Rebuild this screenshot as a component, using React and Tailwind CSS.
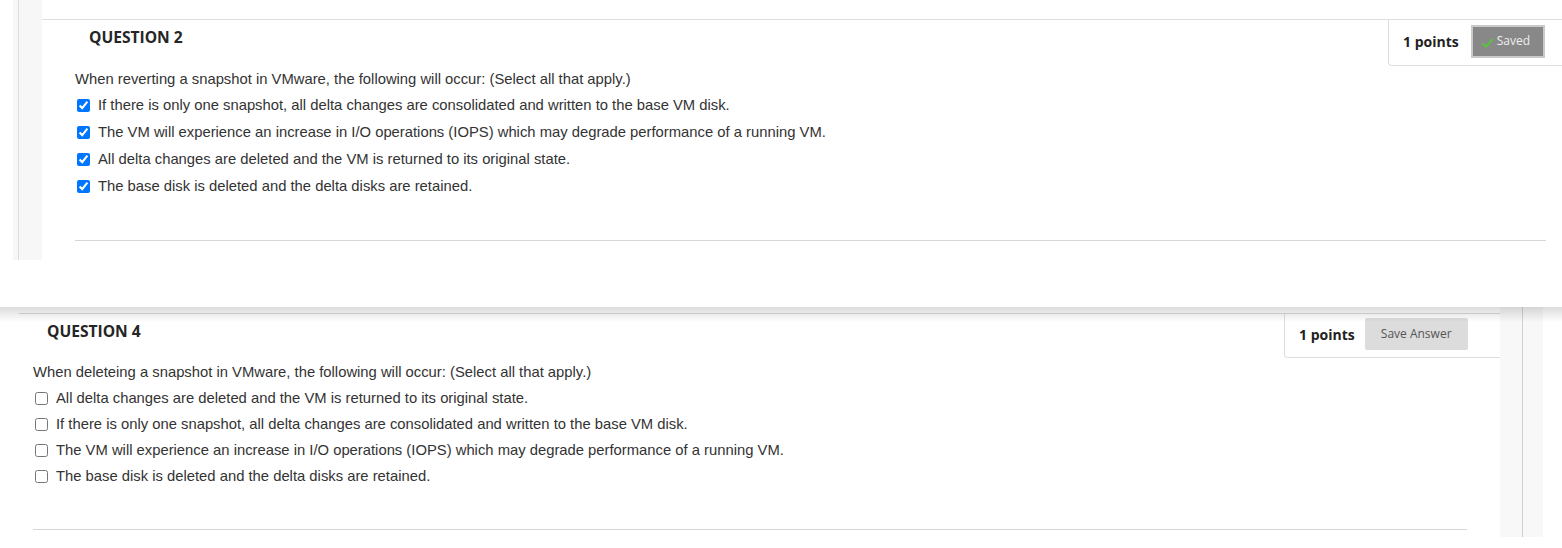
import { useState } from 'react';

const Q2_OPTIONS = [
  'If there is only one snapshot, all delta changes are consolidated and written to the base VM disk.',
  'The VM will experience an increase in I/O operations (IOPS) which may degrade performance of a running VM.',
  'All delta changes are deleted and the VM is returned to its original state.',
  'The base disk is deleted and the delta disks are retained.',
];

const Q4_OPTIONS = [
  'All delta changes are deleted and the VM is returned to its original state.',
  'If there is only one snapshot, all delta changes are consolidated and written to the base VM disk.',
  'The VM will experience an increase in I/O operations (IOPS) which may degrade performance of a running VM.',
  'The base disk is deleted and the delta disks are retained.',
];

const sans = { fontFamily: '"Liberation Sans", Arial, sans-serif' };
const open = { fontFamily: '"Open Sans", "Liberation Sans", sans-serif' };

function Option({ text, checked, onToggle, rowClass }) {
  return (
    <label className={`flex items-center cursor-pointer ${rowClass}`}>
      <input
        type="checkbox"
        checked={checked}
        onChange={onToggle}
        className="w-[13px] h-[13px] m-0 ml-[2px] mr-[8px] accent-[#0075ff]"
      />
      <span className="text-[14.8px] text-[#333]" style={sans}>{text}</span>
    </label>
  );
}

function SavedIcon() {
  return (
    <svg width="13" height="12" viewBox="0 0 13 12" className="mr-[3px] mt-[3px]">
      <path d="M1.5 6.5 L4.8 9.8 L11.5 2.5" fill="none" stroke="#5cc23c" strokeWidth="1.9" strokeLinecap="round" strokeLinejoin="round" />
    </svg>
  );
}

export default function App() {
  const [q2, setQ2] = useState([true, true, true, true]);
  const [q4, setQ4] = useState([false, false, false, false]);

  const flip = (arr, set, i) => set(arr.map((v, j) => (j === i ? !v : v)));

  return (
    <div className="w-[1562px] h-[548px] bg-white overflow-hidden flex flex-col">
      {/* top capture: question 2 */}
      <div className="h-[260px] flex shrink-0">
        <div className="w-[13px]" />
        <div className="w-[29px] bg-[#f7f7f7]">
          <div className="ml-[5px] h-full border-l border-[#dcdcdc]" />
        </div>
        <div className="flex-1 pt-[19px]">
          <div className="border-t border-[#dedede]">
            <div className="flex justify-between items-start">
              <div className="pl-[47px] pt-[6px] text-[15.6px] font-bold text-[#262626]" style={open}>
                QUESTION 2
              </div>
              <div className="w-[174px] h-[46px] border-l border-b border-[#dedede] rounded-bl-[4px] flex items-center pl-[14px] pb-[3px]">
                <span className="text-[14px] font-bold text-[#222] mr-[12px]" style={open}>1 points</span>
                <div className="w-[74px] h-[33px] bg-[#888] border-2 border-[#c9c9c9] flex items-center pl-[8px] text-[12px] text-[#eee]" style={open}>
                  <SavedIcon />
                  Saved
                </div>
              </div>
            </div>
            <div className="pl-[33px] pr-[16px]">
              <div className="text-[14.8px] text-[#333] h-[26px] flex items-center" style={sans}>
                When reverting a snapshot in VMware, the following will occur: (Select all that apply.)
              </div>
              {Q2_OPTIONS.map((t, i) => (
                <Option key={i} text={t} rowClass="h-[27px]" checked={q2[i]} onToggle={() => flip(q2, setQ2, i)} />
              ))}
              <div className="mt-[40px] border-t border-[#d6d6d6]" />
            </div>
          </div>
        </div>
      </div>

      <div className="h-[47px] shrink-0" />

      {/* bottom capture: question 4 */}
      <div className="relative h-[230px] flex shrink-0">
        <div className="absolute left-0 right-0 top-0 h-[15px] pointer-events-none bg-gradient-to-b from-[rgba(0,0,0,0.14)] to-transparent" />
        <div className="w-[19px]" />
        <div className="w-[1481px] pt-[6px]">
          <div className="border-t border-[#d9d9d9]">
            <div className="flex justify-between items-start">
              <div className="pl-[28px] pt-[6px] text-[15.6px] font-bold text-[#262626]" style={open}>
                QUESTION 4
              </div>
              <div className="w-[216px] h-[44px] border-l border-b border-[#dedede] rounded-bl-[4px] flex items-center pl-[14px] pb-[3px]">
                <span className="text-[14px] font-bold text-[#222] mr-[10px]" style={open}>1 points</span>
                <button className="w-[103px] h-[32px] bg-[#dcdcdc] rounded-[2px] text-[12px] text-[#555] cursor-pointer" style={open}>
                  Save Answer
                </button>
              </div>
            </div>
            <div className="pl-[14px] pr-[33px]">
              <div className="text-[14.8px] text-[#333] h-[26px] flex items-center mt-[1px]" style={sans}>
                When deleteing a snapshot in VMware, the following will occur: (Select all that apply.)
              </div>
              {Q4_OPTIONS.map((t, i) => (
                <Option key={i} text={t} rowClass="h-[26px]" checked={q4[i]} onToggle={() => flip(q4, setQ4, i)} />
              ))}
              <div className="mt-[40px] border-t border-[#d6d6d6]" />
            </div>
          </div>
        </div>
        <div className="w-[22px] bg-[#f8f8f8]" />
        <div className="w-px bg-[#d0d0d0]" />
        <div className="w-[20px] bg-[#f8f8f8]" />
      </div>
    </div>
  );
}
